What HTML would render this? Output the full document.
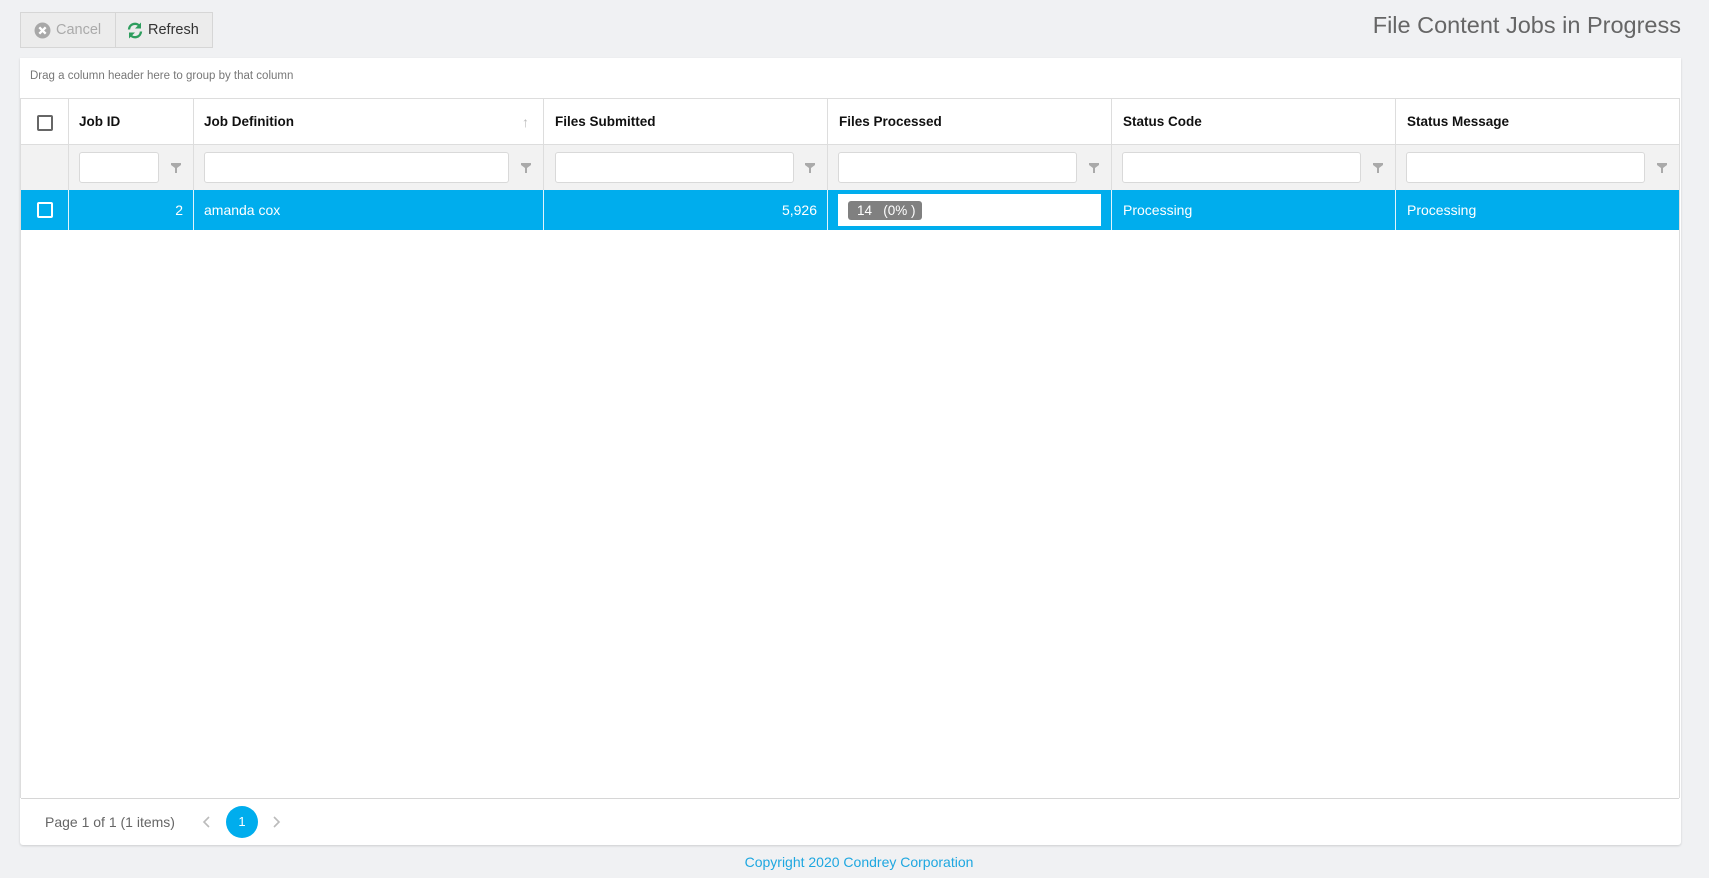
<!DOCTYPE html>
<html><head><meta charset="utf-8"><style>
*{box-sizing:border-box;margin:0;padding:0}
body{width:1709px;height:878px;background:#f0f1f3;font-family:"Liberation Sans",sans-serif;position:relative;overflow:hidden;color:#333}
.abs{position:absolute}
.btns{left:20px;top:12px;width:193px;height:36px;border:1px solid #d6d6d6;background:#ececec}
.sep{left:94px;top:0;width:1px;height:34px;background:#d6d6d6}
.title{right:28px;top:12px;font-size:23.5px;color:#666;white-space:nowrap}
.panel{left:20px;top:58px;width:1661px;height:787px;background:#fff;border-radius:0 0 3px 3px;box-shadow:0 1px 2px rgba(0,0,0,.15)}
.grp{left:30px;top:70px;font-size:11.5px;color:#777}
.hl{background:#ddd;height:1px}
.vl{background:#ddd;width:1px}
.th{font-weight:bold;font-size:13.5px;color:#111;top:114px}
.fin{height:31px;top:152px;background:#fff;border:1px solid #d9d9d9;border-radius:3px}
.cell{color:#fff;font-size:14px;top:202px}
</style></head><body>
<div class="abs btns">
 <svg class="abs" style="left:13px;top:9px" width="17" height="17" viewBox="0 0 16 16"><circle cx="8" cy="8" r="7.5" fill="#a8a8a8"/><path d="M5 5L11 11M11 5L5 11" stroke="#fff" stroke-width="2.2"/></svg>
 <span class="abs" style="left:35px;top:9px;font-size:14.5px;color:#aaa">Cancel</span>
 <div class="abs sep"></div>
 <svg class="abs" style="left:105px;top:8px" width="18" height="19" viewBox="0 0 18 18"><path d="M3 8A6 6 0 0 1 14 5" fill="none" stroke="#2e9e5e" stroke-width="2.4"/><path d="M15 1V7H9Z" fill="#2e9e5e"/><path d="M15 10A6 6 0 0 1 4 13" fill="none" stroke="#2e9e5e" stroke-width="2.4"/><path d="M3 17V11H9Z" fill="#2e9e5e"/></svg>
 <span class="abs" style="left:127px;top:9px;font-size:14.5px;color:#333">Refresh</span>
</div>
<div class="abs title">File Content Jobs in Progress</div>
<div class="abs panel"></div>
<div class="abs grp">Drag a column header here to group by that column</div>
<div class="abs" style="left:20px;top:98px;width:1660px;height:700px;border:1px solid #ddd;border-bottom:none"></div>
<div class="abs" style="left:21px;top:144px;width:1658px;height:46px;background:#f2f2f2"></div>
<div class="abs hl" style="left:21px;top:144px;width:1658px"></div>
<div class="abs" style="left:21px;top:190px;width:1658px;height:40px;background:#00aded"></div>
<div class="abs hl" style="left:21px;top:798px;width:1658px;background:#d6d6d6"></div>
<div class="abs vl" style="left:68px;top:99px;height:91px"></div>
<div class="abs vl" style="left:193px;top:99px;height:91px"></div>
<div class="abs vl" style="left:543px;top:99px;height:91px"></div>
<div class="abs vl" style="left:827px;top:99px;height:91px"></div>
<div class="abs vl" style="left:1111px;top:99px;height:91px"></div>
<div class="abs vl" style="left:1395px;top:99px;height:91px"></div>
<div class="abs vl" style="left:68px;top:190px;height:40px;background:#e0f4fc"></div>
<div class="abs vl" style="left:193px;top:190px;height:40px;background:#e0f4fc"></div>
<div class="abs vl" style="left:543px;top:190px;height:40px;background:#e0f4fc"></div>
<div class="abs vl" style="left:827px;top:190px;height:40px;background:#e0f4fc"></div>
<div class="abs vl" style="left:1111px;top:190px;height:40px;background:#e0f4fc"></div>
<div class="abs vl" style="left:1395px;top:190px;height:40px;background:#e0f4fc"></div>
<div class="abs" style="left:37px;top:115px;width:16px;height:16px;border:2px solid #666;border-radius:2px"></div>
<div class="abs th" style="left:79px">Job ID</div>
<div class="abs th" style="left:204px">Job Definition</div>
<div class="abs" style="left:522px;top:114px;color:#bbb;font-size:14px">↑</div>
<div class="abs th" style="left:555px">Files Submitted</div>
<div class="abs th" style="left:839px">Files Processed</div>
<div class="abs th" style="left:1123px">Status Code</div>
<div class="abs th" style="left:1407px">Status Message</div>
<div class="abs fin" style="left:79px;width:80px"></div>
<div class="abs fin" style="left:204px;width:305px"></div>
<div class="abs fin" style="left:555px;width:239px"></div>
<div class="abs fin" style="left:838px;width:239px"></div>
<div class="abs fin" style="left:1122px;width:239px"></div>
<div class="abs fin" style="left:1406px;width:239px"></div>
<svg width="0" height="0" style="position:absolute"><defs><symbol id="f" viewBox="0 0 10 10"><path d="M0 0H10V2L6 5V10H4V5L0 2Z" fill="#aaa"/></symbol></defs></svg>
<svg class="abs" style="left:171px;top:163px" width="10" height="10"><use href="#f"/></svg>
<svg class="abs" style="left:521px;top:163px" width="10" height="10"><use href="#f"/></svg>
<svg class="abs" style="left:805px;top:163px" width="10" height="10"><use href="#f"/></svg>
<svg class="abs" style="left:1089px;top:163px" width="10" height="10"><use href="#f"/></svg>
<svg class="abs" style="left:1373px;top:163px" width="10" height="10"><use href="#f"/></svg>
<svg class="abs" style="left:1657px;top:163px" width="10" height="10"><use href="#f"/></svg>
<div class="abs" style="left:37px;top:202px;width:16px;height:16px;border:2px solid #fff;border-radius:2px"></div>
<div class="abs cell" style="left:79px;width:104px;text-align:right">2</div>
<div class="abs cell" style="left:204px">amanda cox</div>
<div class="abs cell" style="left:555px;width:262px;text-align:right">5,926</div>
<div class="abs" style="left:838px;top:194px;width:263px;height:32px;background:#fff"></div>
<div class="abs" style="left:848px;top:201px;width:74px;height:19px;background:#808080;border-radius:3px;color:#fff;font-size:13.5px;line-height:19px;padding-left:9px;white-space:pre">14   (0% )</div>
<div class="abs cell" style="left:1123px">Processing</div>
<div class="abs cell" style="left:1407px">Processing</div>
<div class="abs" style="left:45px;top:814px;font-size:14px;color:#666">Page 1 of 1 (1 items)</div>
<svg class="abs" style="left:202px;top:815px" width="10" height="14"><path d="M7 2L2 7L7 12" fill="none" stroke="#bbb" stroke-width="1.6"/></svg>
<div class="abs" style="left:226px;top:806px;width:32px;height:32px;border-radius:50%;background:#00aded;color:#fff;font-size:13px;text-align:center;line-height:32px">1</div>
<svg class="abs" style="left:271px;top:815px" width="10" height="14"><path d="M3 2L8 7L3 12" fill="none" stroke="#bbb" stroke-width="1.6"/></svg>
<div class="abs" style="left:0;width:1718px;top:854px;text-align:center;font-size:14px;color:#1ea7e0">Copyright 2020 Condrey Corporation</div>
</body></html>
